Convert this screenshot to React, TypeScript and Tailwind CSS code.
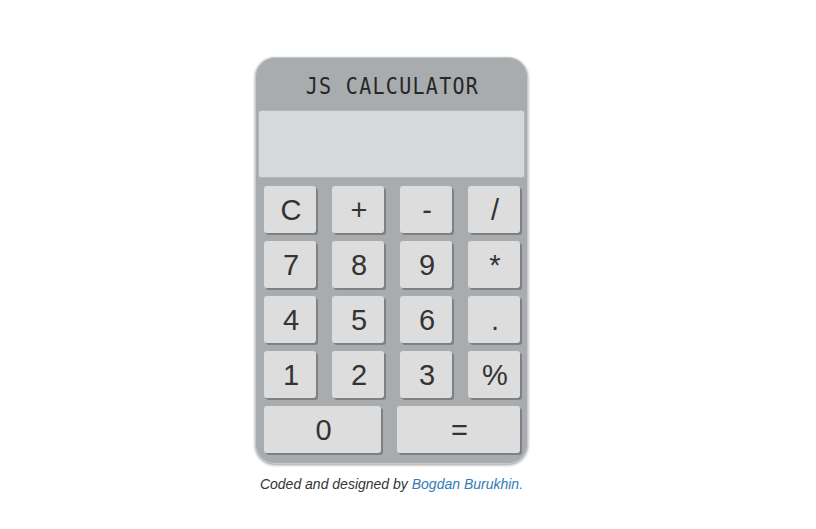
const rows: string[][] = [
  ["C", "+", "-", "/"],
  ["7", "8", "9", "*"],
  ["4", "5", "6", "."],
  ["1", "2", "3", "%"],
];

function Key({ label, wide }: { label: string; wide?: string }) {
  return (
    <button
      type="button"
      className={`${wide ?? "w-[52px]"} h-[47px] rounded-[3px] bg-[#dddddd] text-[29px] leading-none text-[#333] shadow-[2px_2px_0_#7e8081] flex items-center justify-center pt-[1px] pl-[2px]`}
    >
      {label}
    </button>
  );
}

export default function App() {
  return (
    <div className="min-h-[529px] w-[816px] bg-white pt-[57px] pr-[33px] flex flex-col items-center font-['Liberation_Sans',Arial,sans-serif]">
      <div className="w-[273px] rounded-[20px] border border-[#c9cacc] bg-[#a9acae] pb-[10px] shadow-[0_1px_3px_#9a9a9a]">
        <div className="h-[52px] flex items-center justify-center">
          <h1 className="font-['DejaVu_Sans_Mono',monospace] text-[20px] tracking-[1.3px] text-[#262626] scale-y-[1.15] pt-[3px] pl-[2px]">
            JS CALCULATOR
          </h1>
        </div>
        <div className="mx-[2px] h-[68px] rounded-[3px] border border-[#b4b6b8] bg-[#d7d8da]" />
        <div className="mt-[8px] flex flex-col gap-[8px] pl-[8px]">
          {rows.map((row, i) => (
            <div key={i} className="flex gap-[16px]">
              {row.map((k) => (
                <Key key={k} label={k} />
              ))}
            </div>
          ))}
          <div className="flex gap-[16px]">
            <Key label="0" wide="w-[117px]" />
            <Key label="=" wide="w-[123px]" />
          </div>
        </div>
      </div>
      <p className="mt-[10px] text-[14px] italic text-[#333]">
        Coded and designed by{" "}
        <a href="#" className="text-[#337ab7]">
          Bogdan Burukhin.
        </a>
      </p>
    </div>
  );
}
